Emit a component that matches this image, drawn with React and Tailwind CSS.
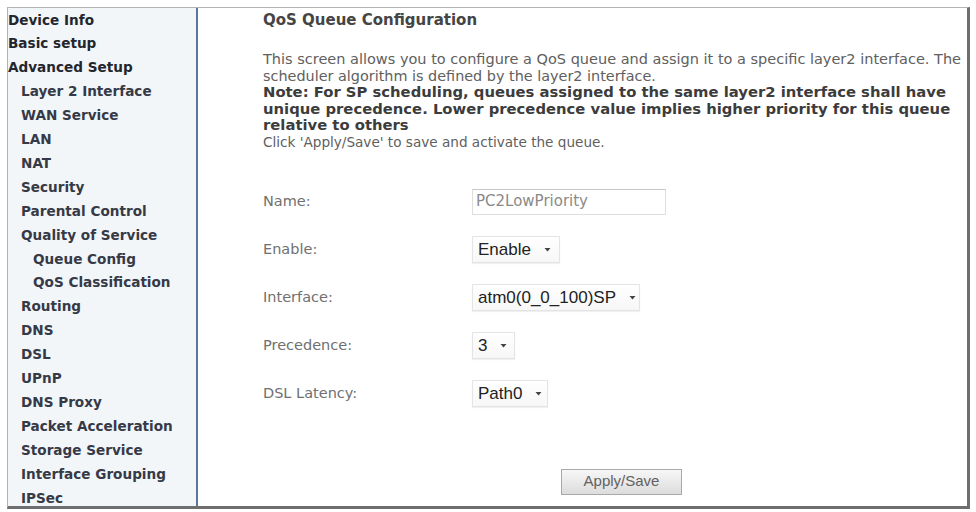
import React from "react";

const menu = [
  { label: "Device Info", level: 0 },
  { label: "Basic setup", level: 0 },
  { label: "Advanced Setup", level: 0 },
  { label: "Layer 2 Interface", level: 1 },
  { label: "WAN Service", level: 1 },
  { label: "LAN", level: 1 },
  { label: "NAT", level: 1 },
  { label: "Security", level: 1 },
  { label: "Parental Control", level: 1 },
  { label: "Quality of Service", level: 1 },
  { label: "Queue Config", level: 2 },
  { label: "QoS Classification", level: 2 },
  { label: "Routing", level: 1 },
  { label: "DNS", level: 1 },
  { label: "DSL", level: 1 },
  { label: "UPnP", level: 1 },
  { label: "DNS Proxy", level: 1 },
  { label: "Packet Acceleration", level: 1 },
  { label: "Storage Service", level: 1 },
  { label: "Interface Grouping", level: 1 },
  { label: "IPSec", level: 1 },
];

const indent = ["pl-0 text-[#23262d]", "pl-[13px] text-[#363a46]", "pl-[25px] text-[#363a46]"];

// little drop arrow used by the fake select boxes
const Caret = () => (
  <svg width="7" height="5" viewBox="0 0 7 5" className="ml-[13px] shrink-0">
    <path d="M0.5 1 L6.5 1 L3.5 4.5 Z" fill="#444" />
  </svg>
);

const SelectBox = ({ value, width }) => (
  <div
    className={`${width} h-[27px] flex items-center justify-between pl-[5px] pr-[9px] bg-gradient-to-b from-white to-[#f7f7f7] border border-[#e4e4e4] shadow-[0_1px_1px_rgba(0,0,0,0.06)] text-[17px] text-[#222] font-['Liberation_Sans',Arial,sans-serif]`}
  >
    <span>{value}</span>
    <Caret />
  </div>
);

const Row = ({ label, children }) => (
  <div className="h-[48px] flex items-center">
    <div className="w-[209px] text-[14.5px] text-[#707070]">{label}</div>
    {children}
  </div>
);

export default function App() {
  return (
    <div className="w-[976px] h-[512px] bg-white pt-[7px] pl-[7px] font-['DejaVu_Sans',Verdana,sans-serif]">
      <div className="w-[963px] h-[502px] flex overflow-hidden border-t border-l border-[#b4b4b4] border-r-[3px] border-b-[3px] border-r-[#6e6e6e] border-b-[#6e6e6e]">
        {/* left navigation */}
        <div className="w-[188px] shrink-0 bg-[#f3f6f9] overflow-hidden pt-[0.5px]">
          {menu.map((item) => (
            <div
              key={item.label}
              className={`${indent[item.level]} whitespace-nowrap font-bold text-[13.6px] leading-[23.9px]`}
            >
              {item.label}
            </div>
          ))}
        </div>
        <div className="w-[2px] shrink-0 bg-[#56789a]" />

        {/* queue form */}
        <div className="flex-1 overflow-hidden pl-[65px] pt-[3px] bg-white">
          <h1 className="font-bold text-[15px] leading-[18px] text-[#454545]">QoS Queue Configuration</h1>

          <div className="mt-[22px] whitespace-nowrap leading-[16.6px]">
            <div className="text-[14.5px] text-[#606060]">
              This screen allows you to configure a QoS queue and assign it to a specific layer2 interface. The
            </div>
            <div className="text-[14.4px] text-[#606060]">scheduler algorithm is defined by the layer2 interface.</div>
            <div className="font-bold text-[14.8px] text-[#3c3c3c]">
              Note: For SP scheduling, queues assigned to the same layer2 interface shall have
            </div>
            <div className="font-bold text-[14.8px] text-[#3c3c3c]">
              unique precedence. Lower precedence value implies higher priority for this queue
            </div>
            <div className="font-bold text-[14.8px] text-[#3c3c3c]">relative to others</div>
            <div className="text-[13.6px] text-[#606060]">Click 'Apply/Save' to save and activate the queue.</div>
          </div>

          <div className="mt-[27px]">
            <Row label="Name:">
              <div className="w-[194px] h-[26px] flex items-center pl-[3px] border border-[#dedede] border-t-[#c8c8c8] text-[15px] text-[#8a8a8a]">
                PC2LowPriority
              </div>
            </Row>
            <Row label="Enable:">
              <SelectBox value="Enable" width="w-[88px]" />
            </Row>
            <Row label="Interface:">
              <SelectBox value="atm0(0_0_100)SP" width="w-[168px]" />
            </Row>
            <Row label="Precedence:">
              <SelectBox value="3" width="w-[43px]" />
            </Row>
            <Row label="DSL Latency:">
              <SelectBox value="Path0" width="w-[76px]" />
            </Row>
          </div>

          <div className="mt-[51px] pl-[298px]">
            <button className="w-[121px] h-[26px] border border-[#a9a9a9] bg-gradient-to-b from-[#f7f7f7] to-[#dcdcdc] text-[15px] text-[#626262] font-['Liberation_Sans',Arial,sans-serif]">
              Apply/Save
            </button>
          </div>
        </div>
      </div>
    </div>
  );
}
